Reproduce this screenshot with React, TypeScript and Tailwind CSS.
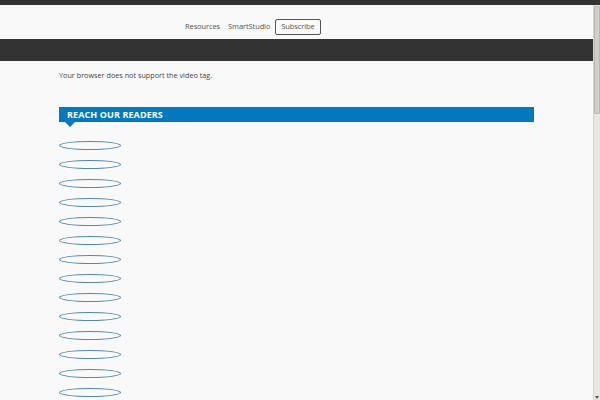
const links = Array.from({ length: 14 }, (_, i) => i)

function Scrollbar() {
  return (
    <div className="w-[7px] flex flex-col bg-[#e6e6e3] border-l border-[#d4d4d0]">
      <div className="mt-[1px] h-[108px] bg-[#cfcfca] border border-[#b9b9b4] rounded-[1px]" />
      <div className="flex-1" />
      <div className="h-[6px] flex items-center justify-center">
        <div className="w-0 h-0 border-l-[2px] border-r-[2px] border-t-[3px] border-l-transparent border-r-transparent border-t-[#555]" />
      </div>
    </div>
  )
}

export default function App() {
  return (
    <div
      className="w-[600px] h-[400px] overflow-hidden bg-[#f9f9f9] flex flex-col"
      style={{ fontFamily: '"Open Sans", "DejaVu Sans", sans-serif' }}
    >
      <div className="h-[5px] bg-[#333333] shrink-0" />
      <div className="flex-1 flex min-h-0">
        <div className="flex-1 flex flex-col min-w-0">
          <header className="h-[34px] shrink-0 flex items-center pt-[10px] pl-[185px] text-[7.5px] text-[#555] tracking-[-0.1px]">
            <a>Resources</a>
            <a className="ml-[8px]">SmartStudio</a>
            <a className="ml-[5px] h-[16px] flex items-center border border-[#555] rounded-[2px] px-[5px]">Subscribe</a>
          </header>
          <div className="h-[22px] bg-[#333333] shrink-0" />
          <main className="px-[59px] pt-[8px]">
            <p className="text-[7.25px] leading-[12px] text-[#444]">Your browser does not support the video tag.</p>
            <div className="mt-[26px] relative">
              <h2 className="h-[15px] bg-[#0079be] text-white text-[9px] font-bold leading-[15px] pl-[8px] tracking-[0.1px]">
                REACH OUR READERS
              </h2>
              <div className="absolute left-[6px] top-[15px] w-0 h-0 border-l-[5px] border-r-[5px] border-t-[5px] border-l-transparent border-r-transparent border-t-[#0079be]" />
            </div>
            <ul className="mt-[19px] flex flex-col gap-[10px]">
              {links.map((i) => (
                <li key={i}>
                  <a className="block w-[62px] h-[9px] rounded-[50%] border border-[#5289ac]" />
                </li>
              ))}
            </ul>
          </main>
        </div>
        <Scrollbar />
      </div>
    </div>
  )
}
